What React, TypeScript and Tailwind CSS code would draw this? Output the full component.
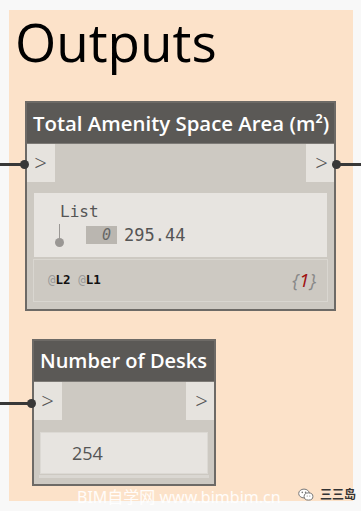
import React from "react";

const sans = { fontFamily: '"Open Sans", "Noto Sans", sans-serif' };
const mono = { fontFamily: '"DejaVu Sans Mono", "Liberation Mono", monospace' };

function Port({ side }: { side: "l" | "r" }) {
  return (
    <div className="w-[28px] h-[38px] bg-[#e6e3de] flex items-center justify-center text-[#555] text-[22px] font-light leading-none" style={sans}>
      <span className={side === "l" ? "-ml-[1px] -mt-[2px]" : "ml-[3px] -mt-[2px]"}>&gt;</span>
    </div>
  );
}

function Wire({ top, left, width, dot }: { top: number; left: number; width: number; dot: "l" | "r" }) {
  return (
    <div className="absolute h-[3px] bg-[#383838]" style={{ top, left, width }}>
      <div
        className="absolute w-[9px] h-[9px] rounded-full bg-[#383838] top-[-3px]"
        style={dot === "r" ? { right: -4 } : { left: -4 }}
      />
    </div>
  );
}

export default function App() {
  return (
    <div className="relative w-[361px] h-[511px] bg-[#f8f8f8] overflow-hidden pt-[10px] pl-[9px]">
      <div className="w-[344px] h-[491px] bg-[#fce2c9]">
        <div className="h-[91px] pt-[5px] pl-[6px]">
          <div className="text-[53px] leading-none text-black" style={sans}>Outputs</div>
        </div>
        {/* Node 1 */}
        <div className="ml-[16px] w-[311px] h-[210px] border-2 border-[#6d6a66] bg-[#cdc9c2] flex flex-col">
          <div className="h-[40px] bg-[#5b5956] flex items-center pl-[6px] text-white text-[20.4px] font-semibold leading-none" style={sans}>
            Total Amenity Space Area (m²)
          </div>
          <div className="h-[1px] bg-[#7d7a76]" />
          <div className="flex justify-between">
            <Port side="l" />
            <Port side="r" />
          </div>
          <div className="mx-[7px] mt-[11px] h-[64px] bg-[#e7e4e0] relative">
            <div className="absolute left-[26px] top-[11px] text-[16px] leading-none text-[#555]" style={mono}>List</div>
            <div className="absolute left-[25px] top-[31px] w-[1px] h-[17px] bg-[#9a9794]" />
            <div className="absolute left-[21px] top-[45px] w-[9px] h-[9px] rounded-full bg-[#9a9794]" />
            <div className="absolute left-[52px] top-[33px] w-[31px] h-[18px] bg-[#bab6b0] flex items-center justify-end pr-[6px] text-[15px] italic text-[#666] leading-none" style={mono}>0</div>
            <div className="absolute left-[90px] top-[34px] text-[17px] leading-none text-[#555]" style={mono}>295.44</div>
          </div>
          <div className="mx-[6px] mt-[2px] h-[43px] border border-[#d9d6d0] bg-[#cdc9c2] flex items-center justify-between pl-[14px] pr-[11px]">
            <div className="text-[12.5px] leading-none" style={mono}>
              <span className="text-[#999]">@</span>
              <span className="font-bold text-[#111]">L2</span>
              <span> </span>
              <span className="text-[#999]">@</span>
              <span className="font-bold text-[#111]">L1</span>
            </div>
            <div className="text-[19px] italic leading-none text-[#888]" style={sans}>
              {"{"}<span className="text-[#a01010]">1</span>{"}"}
            </div>
          </div>
        </div>
        {/* Node 2 */}
        <div className="ml-[23px] mt-[28px] w-[184px] h-[147px] border-2 border-[#6d6a66] bg-[#cdc9c2] flex flex-col">
          <div className="h-[40px] bg-[#5b5956] flex items-center pl-[6px] text-white text-[20px] font-semibold leading-none" style={sans}>
            Number of Desks
          </div>
          <div className="h-[1px] bg-[#7d7a76]" />
          <div className="flex justify-between">
            <Port side="l" />
            <Port side="r" />
          </div>
          <div className="mx-[6px] mt-[12px] h-[42px] bg-[#e7e4e0] border border-[#dcd9d4] flex items-center pl-[31px] text-[18px] text-[#555] leading-none" style={sans}>
            254
          </div>
          <div className="mx-[5px] mt-[1px] h-[3px] bg-[#dad7d2]" />
        </div>
      </div>

      <Wire top={163} left={0} width={25} dot="r" />
      <Wire top={163} left={336} width={25} dot="l" />
      <Wire top={402} left={0} width={32} dot="r" />

      {/* watermark */}
      <div className="absolute left-[77px] top-[489px] text-[16px] leading-none text-white/90 whitespace-nowrap" style={{ fontFamily: '"Noto Sans", "Noto Sans CJK SC", sans-serif' }}>
        BIM自学网 www.bimbim.cn
      </div>
      <svg className="absolute left-[298px] top-[488px]" width="16" height="14" viewBox="0 0 16 14">
        <ellipse cx="6" cy="5.5" rx="5.3" ry="4.4" fill="#fff" stroke="#777" strokeWidth="1" />
        <ellipse cx="10.5" cy="8.5" rx="4.4" ry="3.6" fill="#fff" stroke="#777" strokeWidth="1" />
        <circle cx="4.3" cy="4.4" r="0.8" fill="#777" />
        <circle cx="7.6" cy="4.4" r="0.8" fill="#777" />
        <circle cx="9.2" cy="8" r="0.6" fill="#777" />
        <circle cx="11.8" cy="8" r="0.6" fill="#777" />
      </svg>
      <div className="absolute left-[320px] top-[488px] text-[12px] leading-none text-[#333] font-bold" style={{ fontFamily: '"Noto Sans CJK SC", sans-serif' }}>
        三三岛
      </div>
    </div>
  );
}
